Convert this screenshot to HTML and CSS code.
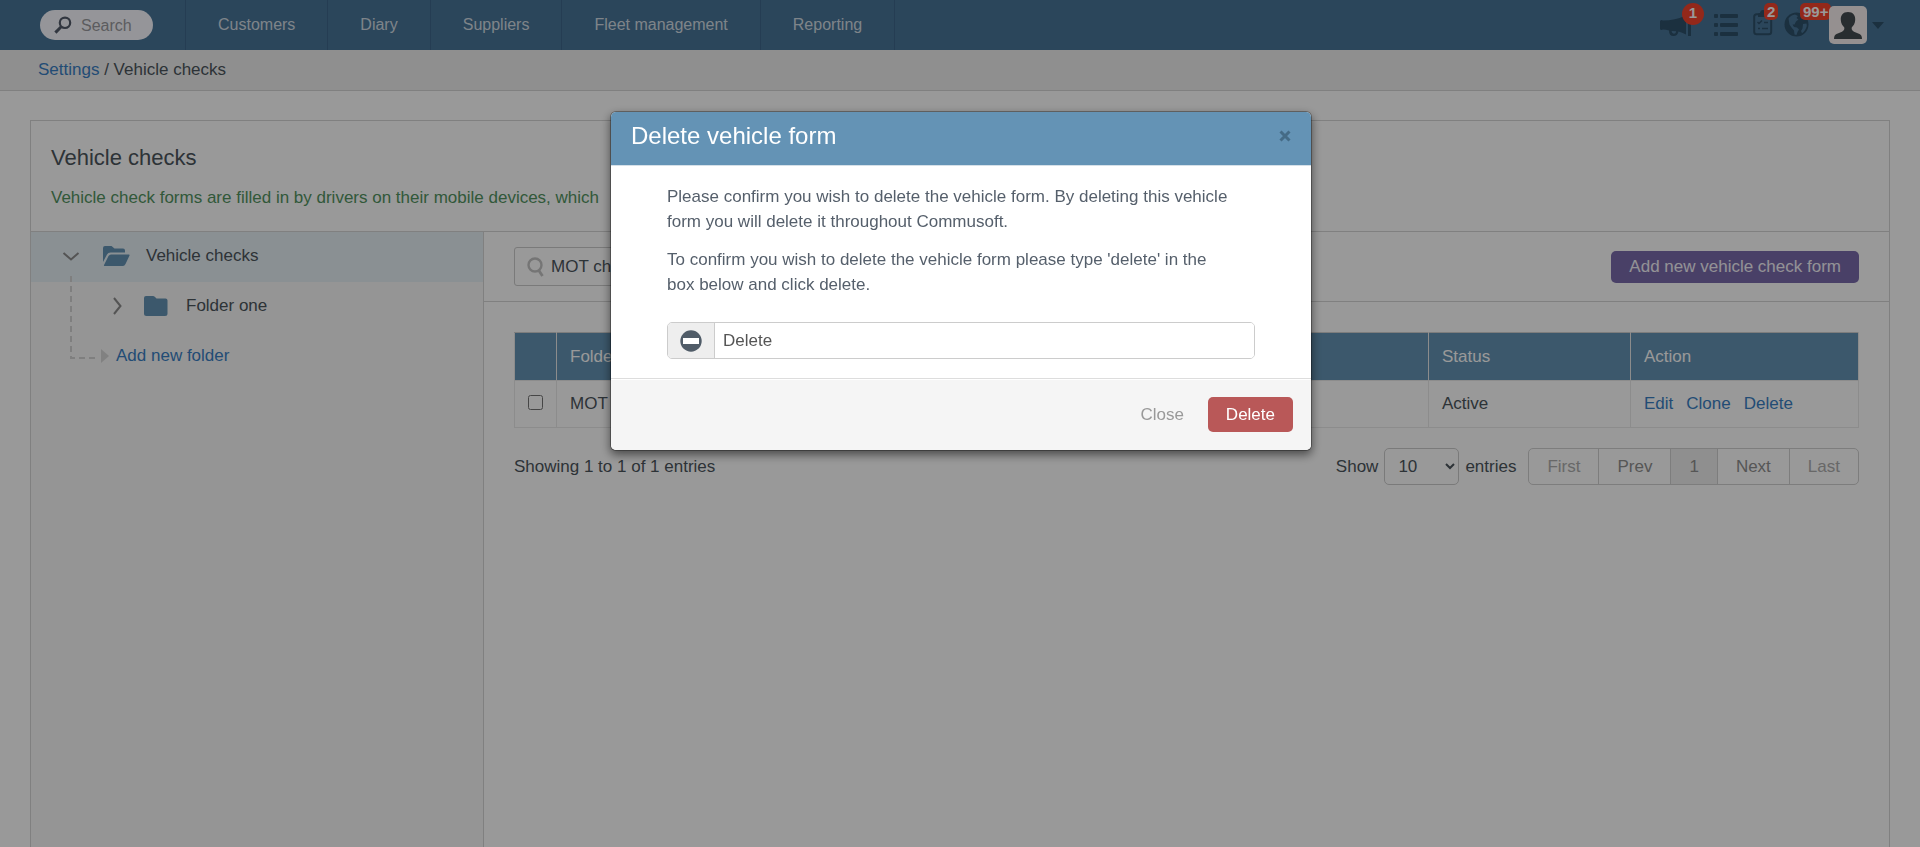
FILE: index.html
```html
<!DOCTYPE html>
<html lang="en">
<head>
<meta charset="utf-8">
<title>Vehicle checks</title>
<link rel="stylesheet" href="styles.css">
</head>
<body>
<div class="app">
  <header class="topbar">
    <label class="search">
      <svg width="18" height="18" viewBox="0 0 18 18" fill="none" stroke="currentColor"><circle cx="11" cy="6.8" r="5.2" stroke-width="2.2"/><path d="M7.2 10.8 1.4 16.6" stroke-width="3"/></svg>
      <input type="text" placeholder="Search" aria-label="Search">
    </label>
    <nav class="nav">
      <a href="#">Customers</a>
      <a href="#">Diary</a>
      <a href="#">Suppliers</a>
      <a href="#">Fleet management</a>
      <a href="#">Reporting</a>
    </nav>
    <div class="tools">
      <button class="tool tool-news" type="button" aria-label="Announcements">
        <svg width="32" height="24" viewBox="0 0 32 24"><path fill="currentColor" d="M0 7.500Q0 6 1.500 6L3 6.500Q15 6.500 26 1.500V20.500Q22 18.500 18.500 17.500Q17.500 22 13.500 22Q9 22 9 16.500Q6 15.600 3 15.500L1.500 16Q0 16 0 14.500ZM11.500 17Q12 19.800 14 19.800Q15.800 19.800 16.200 17.300ZM28 0h3v22h-3z"/></svg>
        <span class="badge badge-round">1</span>
      </button>
      <button class="tool tool-list" type="button" aria-label="Lists">
        <svg width="26" height="24" viewBox="0 0 26 24" fill="currentColor"><rect x="0" y="1" width="4" height="4" rx="1"/><rect x="0" y="10" width="4" height="4" rx="1"/><rect x="0" y="19" width="4" height="4" rx="1"/><rect x="6" y="1" width="18" height="4" rx="1"/><rect x="6" y="10" width="18" height="4" rx="1"/><rect x="6" y="19" width="18" height="4" rx="1"/></svg>
      </button>
      <button class="tool tool-tasks" type="button" aria-label="Tasks">
        <svg width="20" height="26" viewBox="0 0 20 26" fill="none" stroke="currentColor" stroke-width="2"><rect x="1.200" y="4.200" width="17" height="20" rx="2.500"/><path d="M5 7V4.500Q5 3 6.500 3H7Q7.500 0 10 0T13 3H13.500Q15 3 15 4.500V7Z" fill="currentColor" stroke="none"/><path d="M4.500 12 6 13.500 9 10.500M11 12.500h4M5 18.500h2M9 18.500h6" stroke-width="1.500"/></svg>
        <span class="badge badge-tasks">2</span>
      </button>
      <button class="tool tool-globe" type="button" aria-label="Notifications">
        <svg width="25" height="25" viewBox="0 0 25 25"><circle cx="12.500" cy="12.500" r="12" fill="currentColor"/><g fill="#497598"><path d="M4.500 6.500Q7 3 11 2.500L14 4 12.500 6 14.500 7.500 12 9.500 10.500 12.500 8.500 12.500 10 15 13 15.500 15 17.500 13.500 20 12.500 23 10.500 22.500 10 18.500 7.500 15.500 5.500 12.500Z"/><path d="M19 12 22.500 11.500 22.800 14Q21.500 19 18 21.200L17 19 18.500 16.500Z"/></g></svg>
        <span class="badge badge-globe">99+</span>
      </button>
      <button class="account" type="button" aria-label="Account">
        <span class="avatar"><svg width="30" height="29" viewBox="0 0 30 29"><path fill="currentColor" d="M15 1c5 0 7.500 3.500 7.200 8-.2 3.500-1.800 5.800-3.400 7.300-.5 2 .2 3.500 2.200 4.400l5.500 2.300Q29 24 29 28H1q0-4 2.500-5L9 20.700c2-.9 2.700-2.400 2.200-4.400C9.600 14.800 8 12.500 7.800 9 7.500 4.500 10 1 15 1z"/></svg></span>
        <svg width="12" height="7" viewBox="0 0 12 7"><path fill="currentColor" d="M0 0h12L6 7z"/></svg>
      </button>
    </div>
  </header>

  <div class="crumbs"><a href="#">Settings</a> / Vehicle checks</div>

  <main class="panel">
    <div class="panel-head">
      <h1>Vehicle checks</h1>
      <p>Vehicle check forms are filled in by drivers on their mobile devices, which</p>
    </div>
    <div class="columns">
      <aside class="tree">
        <div class="node node-root">
          <svg class="chevron" width="18" height="18" viewBox="0 0 18 18"><path d="M1.500 6 9 12.500 16.500 6"/></svg>
          <svg class="folder" width="27" height="22" viewBox="0 0 27 22" fill="currentColor"><path d="M0 17V3Q0 1 2 1H8.500L11.500 3.500H20Q22 3.500 22 5.500V7.500H7.500Q5 7.500 4 9.500Z"/><path d="M8 9.500H26Q27 9.500 26.500 10.500L22.500 19Q21.500 21 20 21H1.500Q.5 21 1 20L5.500 11Q6.500 9.500 8 9.500Z"/></svg>
          <span>Vehicle checks</span>
        </div>
        <div class="node node-child">
          <svg class="chevron" width="18" height="18" viewBox="0 0 18 18"><path d="M6 1 12.500 9 6 17"/></svg>
          <svg class="folder" width="24" height="22" viewBox="0 0 24 22" fill="currentColor"><path d="M0 18.500V3Q0 1 2 1H9Q10 1 11 2L12.500 3.500H21.500Q23.500 3.500 23.500 5.500V18.500Q23.500 21 21 21H2.500Q0 21 0 18.500Z"/></svg>
          <span>Folder one</span>
        </div>
        <div class="node node-add">
          <svg width="8" height="14" viewBox="0 0 8 14"><path fill="currentColor" d="M0 0 8 7 0 14z"/></svg>
          <a href="#">Add new folder</a>
        </div>
        <svg class="guide" width="26" height="84" viewBox="0 0 26 84"><path d="M1 0V82H26" fill="none" stroke="currentColor" stroke-width="2" stroke-dasharray="6 4"/></svg>
      </aside>
      <section class="content">
        <div class="toolbar">
          <label class="filter">
            <svg width="17" height="20" viewBox="0 0 17 20" fill="none" stroke="currentColor"><circle cx="8" cy="8" r="6.500" stroke-width="2.400"/><path d="M11.500 13 15.500 19" stroke-width="2.800"/></svg>
            <input type="text" value="MOT check" aria-label="Filter forms">
          </label>
          <button class="add-form" type="button">Add new vehicle check form</button>
        </div>
        <div class="listing">
          <table class="forms">
            <colgroup><col class="col-check"><col><col class="col-status"><col class="col-action"></colgroup>
            <thead><tr><th></th><th>Folder</th><th>Status</th><th>Action</th></tr></thead>
            <tbody><tr>
              <td class="check"><input type="checkbox" aria-label="Select MOT check"></td>
              <td>MOT check</td>
              <td>Active</td>
              <td><div class="links"><a href="#">Edit</a><a href="#">Clone</a><a href="#">Delete</a></div></td>
            </tr></tbody>
          </table>
          <div class="table-foot">
            <span class="count">Showing 1 to 1 of 1 entries</span>
            <label class="page-size">Show <select><option>10</option><option>25</option><option>50</option></select> entries</label>
            <div class="pager">
              <button type="button" class="muted">First</button>
              <button type="button">Prev</button>
              <button type="button" class="current">1</button>
              <button type="button">Next</button>
              <button type="button" class="muted">Last</button>
            </div>
          </div>
        </div>
      </section>
    </div>
  </main>
</div>

<div class="overlay">
  <div class="modal" role="dialog" aria-modal="true" aria-labelledby="modal-title">
    <div class="modal-head">
      <h2 id="modal-title">Delete vehicle form</h2>
      <button type="button" class="dismiss" aria-label="Dismiss"><svg width="12" height="12" viewBox="0 0 12 12"><path d="M1.500 1.500 10.500 10.500M10.500 1.500 1.500 10.500" stroke="currentColor" stroke-width="3"/></svg></button>
    </div>
    <div class="modal-body">
      <p>Please confirm you wish to delete the vehicle form. By deleting this vehicle form you will delete it throughout Commusoft.</p>
      <p>To confirm you wish to delete the vehicle form please type 'delete' in the box below and click delete.</p>
      <label class="confirm">
        <span class="addon"><svg width="22" height="22" viewBox="0 0 22 22"><circle cx="11" cy="11" r="10.700" fill="currentColor"/><rect x="3" y="8" width="16" height="6" fill="#fff"/></svg></span>
        <input type="text" value="Delete" aria-label="Type delete to confirm">
      </label>
    </div>
    <div class="modal-foot">
      <button type="button" class="close">Close</button>
      <button type="button" class="danger">Delete</button>
    </div>
  </div>
</div>
</body>
</html>
```

FILE: styles.css
```css
* { box-sizing: border-box; }

body {
  margin: 0;
  font-family: "Liberation Sans", Arial, sans-serif;
  font-size: 17px;
  line-height: 24px;
  color: #4c555c;
  background: #fff;
}

h1, h2, p { margin: 0; font-weight: 400; }
a { color: #3a7fc4; text-decoration: none; }
button, input, select { font: inherit; color: inherit; }
button { padding: 0; border: 0; background: none; cursor: pointer; }
svg { display: block; flex: none; }

.app { display: flex; flex-direction: column; min-height: 100vh; }

/* Top bar */
.topbar {
  display: flex;
  align-items: center;
  height: 50px;
  padding: 0 36px 0 40px;
  background: #497598;
  font-size: 16px;
}
.search {
  display: flex;
  align-items: center;
  gap: 9px;
  width: 113px;
  height: 30px;
  margin-right: 32px;
  padding: 0 12px 0 14px;
  border-radius: 15px;
  background: #f8f9ff;
  color: #535a6a;
}
.search input { width: 100%; min-width: 0; padding: 2px 0 0; border: 0; outline: 0; background: none; }
.search input::placeholder { color: #9a9a9e; }
.nav { display: flex; border-left: 1px solid #3e678a; }
.nav a { padding: 0 32px; border-right: 1px solid #3e678a; line-height: 50px; color: #d3dde5; }

.tools { display: flex; align-items: center; margin-left: auto; color: #2d5069; }
.tool { position: relative; color: inherit; }
.tool-news { margin: 2px 22px 0 0; }
.tool-list { margin-right: 13px; }
.tool-tasks { margin: 0 11px 4px 0; }
.tool-globe { margin: 0 20px 2px 0; }
.badge {
  position: absolute;
  height: 17px;
  padding: 0 3px;
  border-radius: 5px;
  background: #f5432c;
  color: #fff;
  font-size: 15px;
  font-weight: 700;
  line-height: 17px;
}
.badge-round { top: -11px; left: 22px; width: 22px; height: 22px; border-radius: 50%; line-height: 20px; }
.badge-tasks { top: -7px; left: 11px; }
.badge-globe { top: -9px; left: 16px; }
.account { display: flex; align-items: center; gap: 5px; color: inherit; }
.avatar { position: relative; padding: 5px 4px 4px; border-radius: 5px; background: #f8f1f0; color: #444b50; }

/* Breadcrumb */
.crumbs { padding: 8px 38px; border-bottom: 1px solid #d5d5d5; background: #eee; }

/* Page panel */
.panel {
  flex: 1;
  display: flex;
  flex-direction: column;
  margin: 29px 30px 0;
  border: 1px solid #d5d5d5;
  border-bottom: 0;
}
.panel-head { padding: 24px 20px 21px; border-bottom: 1px solid #d5d5d5; }
.panel-head h1 { margin-bottom: 15px; font-size: 22px; line-height: 26px; }
.panel-head p { color: #53945f; }
.columns { flex: 1; display: flex; }

/* Folder tree */
.tree { position: relative; flex: 0 0 453px; border-right: 1px solid #d5d5d5; background: #f8f8f8; }
.node { display: flex; align-items: center; height: 50px; padding-bottom: 2px; }
.node-root { gap: 23px; padding-left: 31px; background: #e6f0f6; }
.node-root .folder { margin-right: -7px; }
.node-child { gap: 18px; padding-left: 77px; }
.node-add { gap: 7px; padding-left: 70px; color: #d8d8d8; }
.folder { color: #6493b4; }
.chevron { fill: none; stroke: #8c8c8c; stroke-width: 2; }
.guide { position: absolute; top: 44px; left: 39px; color: #d4d4d4; }

/* Main column */
.content { flex: 1; min-width: 0; }
.toolbar {
  display: flex;
  align-items: center;
  justify-content: space-between;
  padding: 15px 30px;
  border-bottom: 1px solid #d5d5d5;
}
.filter {
  display: flex;
  align-items: center;
  gap: 7px;
  width: 300px;
  height: 39px;
  padding: 0 12px;
  border: 1px solid #ccc;
  border-radius: 3px;
  color: #c4c4c4;
}
.filter input { flex: 1; min-width: 0; padding: 0; border: 0; outline: 0; background: none; color: #4c555c; }
.add-form { height: 32px; padding: 0 18px; border-radius: 5px; background: #7a6bac; color: #f5f3fa; }

.listing { padding: 30px; }
.forms { width: 100%; border-collapse: collapse; table-layout: fixed; }
.forms th, .forms td { height: 48px; padding: 0 13px; border: 1px solid #e9e9e9; text-align: left; }
.forms td { height: 47px; }
.forms th { border-top-color: #d0d0d0; background: #6493b4; color: #fff; font-weight: 400; }
.col-check { width: 42px; }
.col-status { width: 202px; }
.col-action { width: 228px; }
.forms .check { padding: 0 0 4px; text-align: center; }
.check input { width: 15px; height: 15px; margin: 0; vertical-align: middle; }
.links { display: flex; gap: 13px; }

.table-foot { display: flex; align-items: center; margin-top: 20px; }
.count { margin-right: auto; }
.page-size { display: flex; align-items: center; gap: 6px; margin-right: 12px; }
.page-size select {
  width: 75px;
  height: 37px;
  padding: 0 0 0 9px;
  border: 1px solid #ccc;
  border-radius: 5px;
  background: #fff;
}
.pager { display: flex; border: 1px solid #d0d0d0; border-radius: 5px; overflow: hidden; }
.pager button { height: 35px; padding: 0 18px; border-right: 1px solid #d0d0d0; color: #8f8f8f; }
.pager button:last-child { border-right: 0; }
.pager .muted { color: #adadad; }
.pager .current { background: #eee; }

/* Confirmation dialog */
.overlay {
  position: fixed;
  inset: 0;
  display: flex;
  align-items: flex-start;
  justify-content: center;
  padding: 111px 0 0 2px;
  background: rgba(0, 0, 0, 0.4);
}
.modal {
  width: 702px;
  border: 1px solid rgba(0, 0, 0, 0.3);
  border-radius: 6px;
  background: #fff;
  background-clip: padding-box;
  box-shadow: 0 4px 10px rgba(0, 0, 0, 0.5);
  overflow: hidden;
  color: #555f6b;
}
.modal-head {
  display: flex;
  align-items: center;
  justify-content: space-between;
  padding: 11px 20px 16px;
  border-bottom: 1px solid #d5e0e8;
  background: #6493b5;
}
.modal-head h2 { color: #fff; font-size: 24px; line-height: 26px; }
.dismiss { color: #456b86; }
.modal-body { padding: 18px 56px 19px; line-height: 25px; }
.modal-body p { margin-right: 24px; }
.modal-body p + p { margin-top: 13px; }
.confirm { display: flex; height: 37px; margin-top: 25px; border: 1px solid #ccc; border-radius: 5px; overflow: hidden; }
.addon {
  display: flex;
  align-items: center;
  justify-content: center;
  width: 47px;
  border-right: 1px solid #ccc;
  background: #eee;
  color: #505c68;
}
.confirm input { flex: 1; padding: 0 8px; border: 0; outline: 0; background: #fff; color: #555; }
.modal-foot {
  display: flex;
  align-items: center;
  justify-content: flex-end;
  gap: 24px;
  padding: 18px;
  border-top: 1px solid #ddd;
  background: #f5f5f5;
  box-shadow: inset 0 1px 0 #fff;
}
.close { color: #999; }
.danger { height: 35px; padding: 0 18px; border-radius: 5px; background: #b95858; color: #fff; }
```
